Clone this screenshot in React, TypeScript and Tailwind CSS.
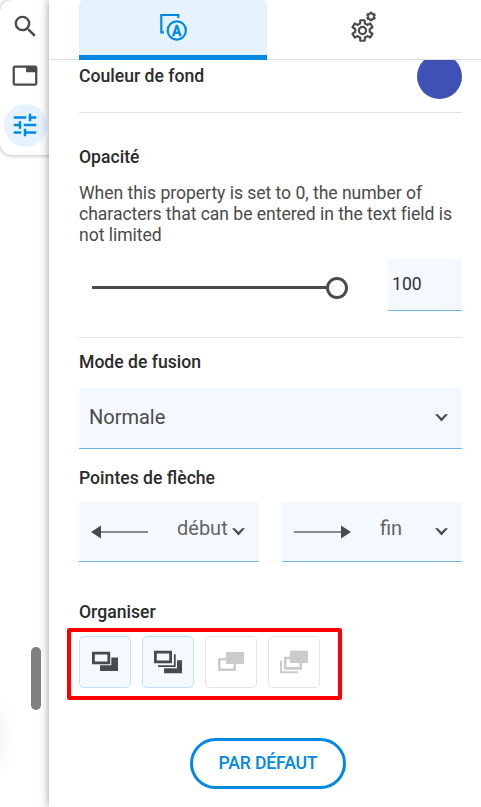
import clsx from "clsx";
import type { ReactNode } from "react";

// six-toothed gear outline
function gearPath(cx: number, cy: number, tip: number, root: number) {
  const points: string[] = [];
  for (let i = 0; i < 6; i++) {
    const corners = [
      [-19, root],
      [-12, tip],
      [12, tip],
      [19, root],
    ];
    corners.forEach(([offset, r]) => {
      const a = ((i * 60 - 90 + offset) * Math.PI) / 180;
      points.push(`${(cx + r * Math.cos(a)).toFixed(2)} ${(cy + r * Math.sin(a)).toFixed(2)}`);
    });
  }
  return `M${points.join("L")}Z`;
}

function Title({ children, className }: { children: ReactNode; className?: string }) {
  return (
    <h3 className={clsx("text-[17.6px] leading-[22px] font-medium text-[#2b2b2b] whitespace-nowrap", className)}>
      {children}
    </h3>
  );
}

function Chevron() {
  return (
    <svg width="13" height="8" viewBox="0 0 13 8" fill="#4a4a4a" className="shrink-0">
      <path d="M0 .3h2.800L6.500 4l3.700-3.700H13L6.500 7.500z" />
    </svg>
  );
}

function OrderButton({ disabled, children }: { disabled?: boolean; children: ReactNode }) {
  return (
    <button
      disabled={disabled}
      className={clsx(
        "w-[52px] h-[52px] shrink-0 rounded-[5px] border flex",
        disabled ? "border-[#e4e4e4] bg-white text-[#cbcbcb]" : "border-[#bfe0fa] bg-[#f3f9fe] text-[#4a4a4a]"
      )}
    >
      <svg width="50" height="50" viewBox="0 0 50 50" fill="none">
        {children}
      </svg>
    </button>
  );
}

export default function App() {
  return (
    <main
      className="w-[481px] h-[807px] flex overflow-hidden bg-white text-[#4a4a4a]"
      style={{ fontFamily: "Roboto, sans-serif" }}
    >
      {/* LEFT RAIL */}
      <aside className="relative w-[49px] shrink-0 h-full">
        <div className="w-[60px] h-[155px] rounded-l-[12px] bg-white shadow-[0_0_5px_rgba(0,0,0,0.35)]">
          <div className="flex flex-col items-center w-[50px] pt-3">
            <svg width="29" height="29" viewBox="0 0 24 24" fill="#4a4a4a">
              <path d="M15.500 14h-.79l-.28-.27A6.471 6.471 0 0 0 16 9.500 6.500 6.500 0 1 0 9.500 16c1.610 0 3.090-.59 4.230-1.570l.27.28v.79l5 4.990L20.490 19l-4.990-5zm-6 0C7.010 14 5 11.990 5 9.500S7.010 5 9.500 5 14 7.010 14 9.500 11.990 14 9.500 14z" />
            </svg>
            <svg width="28" height="27" viewBox="0 0 24 24" fill="#4a4a4a" className="mt-[21px]">
              <path d="M21 3H3c-1.100 0-2 .9-2 2v14c0 1.100.9 2 2 2h18c1.100 0 2-.9 2-2V5c0-1.100-.9-2-2-2zm0 16H3V5h10v4h8v10z" />
            </svg>
            <div className="w-[43px] h-[43px] mt-[14.5px] rounded-full bg-[#e6f3fe] flex items-center justify-center">
              <svg width="30" height="30" viewBox="0 0 24 24" fill="#0089e3">
                <path d="M3 17v2h6v-2H3zM3 5v2h10V5H3zm10 16v-2h8v-2h-8v-2h-2v6h2zM7 9v2H3v2h4v2h2V9H7zm14 4v-2H11v2h10zm-6-4h2V7h4V5h-4V3h-2v6z" />
              </svg>
            </div>
          </div>
        </div>

        {/* soft edge of the card hidden off the left side */}
        <div className="absolute left-[-20px] top-[712px] w-5 h-[50px] shadow-[0_0_20px_rgba(0,0,0,0.08)]" />
        <div className="absolute left-[31px] top-[647px] w-[10px] h-[63px] rounded-full bg-[#808080]" />
      </aside>

      {/* PROPERTIES PANEL */}
      <section className="relative flex-1 min-w-0 h-full bg-white shadow-[0_0_9px_rgba(0,0,0,0.4)]">
        <header className="relative z-10 h-[60px] pl-[30px] flex bg-white border-b border-[#dedede]">
          <div className="w-[188px] h-[60px] rounded-t-[5px] bg-[#e6f3fe] border-b-[5px] border-[#0089e3] flex justify-center">
            <svg width="28" height="28" viewBox="0 0 28 28" fill="none" className="mt-[13px] text-[#0089e3]">
              <path d="M5 19.300H2.300V2h17v3" stroke="currentColor" strokeWidth="2.200" />
              <circle cx="17.800" cy="17.500" r="9.100" stroke="currentColor" strokeWidth="2.200" />
              <text
                x="17.800"
                y="22.500"
                textAnchor="middle"
                fontSize="14"
                fontWeight="700"
                fill="currentColor"
                stroke="currentColor"
                strokeWidth="0.300"
              >
                A
              </text>
            </svg>
          </div>
          <div className="flex-1 flex justify-center">
            <svg width="28" height="32" viewBox="0 0 28 32" fill="none" stroke="#4a4a4a" className="mt-[11px] mr-5">
              <path d={gearPath(12.5, 19.5, 10.5, 7.4)} strokeWidth="2.200" strokeLinejoin="round" />
              <circle cx="12.500" cy="19.500" r="3.600" strokeWidth="2.200" />
              <path d={gearPath(21, 5.5, 4.1, 2.8)} strokeWidth="1.700" strokeLinejoin="round" />
            </svg>
          </div>
        </header>

        <div className="pl-[30px] pr-[19px]">
          {/* background colour */}
          <div className="flex justify-between h-[52px]">
            <Title className="mt-[5px]">Couleur de fond</Title>
            <div className="w-[45px] h-[45px] mt-[-6px] rounded-full bg-[#3f51b5]" />
          </div>
          <hr className="border-[#e2e2e2]" />

          {/* opacity */}
          <Title className="mt-[33px]">Opacité</Title>
          <p className="mt-[15px] text-[17.6px] leading-[21px] tracking-[-0.05px] whitespace-nowrap">
            When this property is set to 0, the number of
            <br />
            characters that can be entered in the text field is
            <br />
            not limited
          </p>
          <div className="flex justify-between mt-[13px]">
            <div className="flex items-center h-[57px] pl-[13px]">
              <div className="w-[234px] h-[3px] bg-[#4a4a4a]" />
              <div className="w-[22px] h-[22px] rounded-full border-[3px] border-[#4a4a4a] bg-white" />
            </div>
            <div className="w-[74px] h-[52px] pl-1 pt-[14px] bg-[#f3f9fe] border-b border-[#6cb5e6] text-[17.6px] leading-[22px] text-[#333333]">
              100
            </div>
          </div>
          <hr className="mt-[21px] border-[#e2e2e2]" />

          {/* blend mode */}
          <Title className="mt-[13px]">Mode de fusion</Title>
          <div className="flex items-center justify-between h-[61px] mt-[15px] pl-[10px] pr-[14px] bg-[#f3f9fe] border-b border-[#6cb5e6]">
            <span className="mb-[2px] text-[20px] leading-6">Normale</span>
            <Chevron />
          </div>

          {/* arrow heads */}
          <Title className="mt-[18px]">Pointes de flèche</Title>
          <div className="flex justify-between mt-[13px] text-[20px] leading-6 text-[#666666]">
            <div className="w-[180px] h-[60px] flex items-center pl-3 pr-[14px] bg-[#f3f9fe] border-b border-[#6cb5e6]">
              <svg width="58" height="14" viewBox="0 0 58 14">
                <path d="M9 7h48" stroke="#848c8c" strokeWidth="2" />
                <path d="M0 7l10-6.500v13z" fill="#4a4a4a" />
              </svg>
              <span className="ml-7 mb-[7px]">début</span>
              <span className="ml-auto">
                <Chevron />
              </span>
            </div>
            <div className="w-[180px] h-[60px] flex items-center pl-3 pr-[14px] bg-[#f3f9fe] border-b border-[#6cb5e6]">
              <svg width="58" height="14" viewBox="0 0 58 14">
                <path d="M0 7h48" stroke="#848c8c" strokeWidth="2" />
                <path d="M57 7L47 .5v13z" fill="#4a4a4a" />
              </svg>
              <span className="ml-7 mb-[7px]">fin</span>
              <span className="ml-auto">
                <Chevron />
              </span>
            </div>
          </div>

          {/* stacking order */}
          <Title className="mt-[39px]">Organiser</Title>
          <div className="w-[275px] h-[72px] ml-[-12px] mt-[5px] pl-[8px] pt-[4px] flex gap-[11px] border-4 border-[#ff0000] rounded-[2px]">
            <OrderButton>
              <path d="M13.400 16.200h15.400v9.700H13.400z" stroke="currentColor" strokeWidth="2.800" />
              <path d="M31.300 20.500H38V34H20v-5.700h11.300z" fill="currentColor" />
            </OrderButton>
            <OrderButton>
              <path d="M12.400 15.100h15.200v9.800H12.400z" stroke="currentColor" strokeWidth="2.800" />
              <path d="M31.800 17.300v11.900H15" stroke="currentColor" strokeWidth="1.800" />
              <path d="M34 23.300h5v13H21v-5h13z" fill="currentColor" />
            </OrderButton>
            <OrderButton disabled>
              <path d="M13.300 22.300h15.400v10.400H13.300z" stroke="currentColor" strokeWidth="2.600" />
              <path d="M20 15h18v12H20z" fill="currentColor" />
            </OrderButton>
            <OrderButton disabled>
              <path d="M12 23.700v11.600h17" stroke="currentColor" strokeWidth="2" />
              <path d="M16.300 21h15.400v10.400H16.300z" stroke="currentColor" strokeWidth="2.600" />
              <path d="M21 13.700h18V26H21z" fill="currentColor" />
            </OrderButton>
          </div>

          <button className="block w-[156px] h-[51px] ml-[111px] mt-[38px] rounded-full border-[3px] border-[#0089e3] bg-white text-[17.6px] tracking-[-0.15px] font-medium text-[#0089e3] whitespace-nowrap">
            PAR DÉFAUT
          </button>
        </div>
      </section>
    </main>
  );
}
